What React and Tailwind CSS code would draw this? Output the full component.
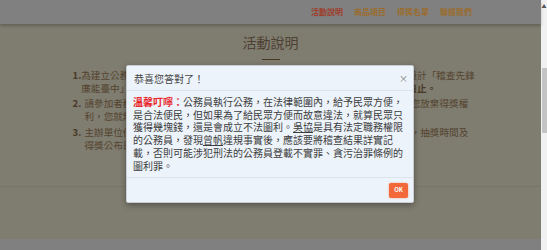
const font = { fontFamily: '"Noto Sans CJK TC", "Noto Sans", sans-serif' };

function NavBar() {
    const links = ["活動說明", "商品項目", "得獎名單", "聯絡我們"];
    return (
        <div className="h-[24px] bg-[#808080] flex items-center justify-end pr-[69px] gap-[11px] shadow-[0_2px_3px_rgba(0,0,0,0.22)] relative z-10">
            {links.map((l, i) => (
                <span
                    key={l}
                    className={`text-[8px] font-bold leading-none ${i === 0 ? "text-[#9e3e2c]" : "text-[#9a6c2e]"}`}
                >
                    {l}
                </span>
            ))}
        </div>
    );
}

function Rules() {
    return (
        <div className="mx-auto w-[396px] mt-[9px] text-[9.6px] leading-[13px] text-[#54442f] whitespace-nowrap">
            <div className="flex mb-[2px]">
                <span className="w-[12px] font-bold text-[#4a3a28]">1.</span>
                <span>
                    為建立公務員廉潔形象，臺中市政府政風處特別結合線上互動遊戲與網路平台設計「稽查先鋒
                    <br />
                    廉能臺中」線上闖關遊戲，歡迎民眾踴躍參加，活動期間<b className="text-[#4a3a28]">即日起至十月三十一日止。</b>
                </span>
            </div>
            <div className="flex mb-[3px]">
                <span className="w-[12px] font-bold text-[#4a3a28]">2.</span>
                <span>
                    請參加者務必填寫正確之個人資料，如資料不全或有錯誤致無法聯繫者，視為您放棄得獎權
                    <br />
                    利，您就無法參加抽獎及領取獎品。
                </span>
            </div>
            <div className="flex">
                <span className="w-[12px] font-bold text-[#4a3a28]">3.</span>
                <span>
                    主辦單位保留活動修改、變更及終止之權利，如有未盡事宜將另行公告於網站，抽獎時間及
                    <br />
                    得獎公布日期請詳見本網站最新消息。
                </span>
            </div>
        </div>
    );
}

function Modal() {
    return (
        <div className="absolute left-[126px] top-[65px] w-[288px] h-[138px] bg-[#edf3fa] border border-[#c9cdd2] rounded-[2px] shadow-[0_2px_6px_rgba(0,0,0,0.35)] flex flex-col z-20">
            <div className="h-[25px] border-b border-[#dbe3ec] flex items-center justify-between pl-[7px] pr-[5px]">
                <span className="text-[10px] text-[#444]">恭喜您答對了！</span>
                <span className="text-[9px] text-[#777] leading-none">×</span>
            </div>
            <div className="flex-1 px-[6px] pt-[5px] text-[10px] leading-[12.7px] text-[#3c3c3c] whitespace-nowrap">
                <b className="text-[#e8262b]">溫馨叮嚀：</b>公務員執行公務，在法律範圍內，給予民眾方便，
                <br />
                是合法便民，但如果為了給民眾方便而故意違法，就算民眾只
                <br />
                獲得幾塊錢，還是會成立不法圖利。<span className="underline">吳協</span>是具有法定職務權限
                <br />
                的公務員，發現<span className="underline">曾帆</span>違規事實後，應該要將稽查結果詳實記
                <br />
                載，否則可能涉犯刑法的公務員登載不實罪、貪污治罪條例的
                <br />
                圖利罪。
            </div>
            <div className="h-[25px] border-t border-[#dbe3ec] flex items-center justify-end px-[5px]">
                <button className="w-[19px] h-[15px] bg-[#f2683b] rounded-[2px] text-white text-[6px] font-bold leading-none shadow-[0_0_2px_rgba(242,104,59,0.6)]">
                    OK
                </button>
            </div>
        </div>
    );
}

export default function App() {
    return (
        <div className="relative w-[547px] h-[250px] flex overflow-hidden bg-[#808080]" style={font}>
            <div className="flex-1 flex flex-col">
                <NavBar />
                <div className="flex-1 bg-[#7f7c70] flex flex-col">
                    <div className="h-[163px] border-b border-[#77746a]">
                        <h2 className="text-center text-[14px] leading-[18px] text-[#4e4132] mt-[9px]">活動說明</h2>
                        <div className="mx-auto mt-[8px] w-[18px] h-[1px] bg-[#4a3525]" />
                        <Rules />
                    </div>
                </div>
                <div className="h-[11px] bg-[#808080]" />
            </div>
            <div className="w-[6px] bg-[#f1f1f1] flex flex-col items-center">
                <span className="text-[5px] leading-none mt-[3px] text-[#555]">▲</span>
                <div className="mt-[60px] w-[5px] h-[65px] bg-[#c4c4c4]" />
            </div>
            <Modal />
        </div>
    );
}
